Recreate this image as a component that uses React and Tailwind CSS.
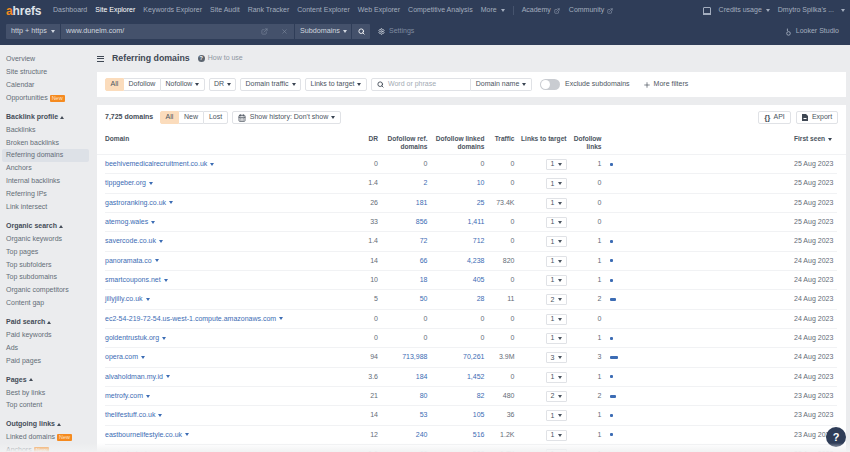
import { Search, Settings, X, ExternalLink, Plus, CalendarDays } from 'lucide-react';

const font = { fontFamily: '"Liberation Sans", Arial, sans-serif' };

const navLinks = ['Dashboard', 'Site Explorer', 'Keywords Explorer', 'Site Audit', 'Rank Tracker', 'Content Explorer', 'Web Explorer', 'Competitive Analysis'];

const sideGroups = [
  { items: [['Overview'], ['Site structure'], ['Calendar'], ['Opportunities', true]] },
  { title: 'Backlink profile', items: [['Backlinks'], ['Broken backlinks'], ['Referring domains', false, true], ['Anchors'], ['Internal backlinks'], ['Referring IPs'], ['Link intersect']] },
  { title: 'Organic search', items: [['Organic keywords'], ['Top pages'], ['Top subfolders'], ['Top subdomains'], ['Organic competitors'], ['Content gap']] },
  { title: 'Paid search', items: [['Paid keywords'], ['Ads'], ['Paid pages']] },
  { title: 'Pages', items: [['Best by links'], ['Top content']] },
  { title: 'Outgoing links', items: [['Linked domains', true], ['Anchors', true]] },
];

const rows = [
  ['beehivemedicalrecruitment.co.uk', '0', '0', '0', '0', 1, '1', '25 Aug 2023'],
  ['tippgeber.org', '1.4', '2', '10', '0', 1, '0', '25 Aug 2023'],
  ['gastroranking.co.uk', '26', '181', '25', '73.4K', 1, '0', '25 Aug 2023'],
  ['atemog.wales', '33', '856', '1,411', '0', 1, '0', '25 Aug 2023'],
  ['savercode.co.uk', '1.4', '72', '712', '0', 1, '1', '25 Aug 2023'],
  ['panoramata.co', '14', '66', '4,238', '820', 1, '1', '24 Aug 2023'],
  ['smartcoupons.net', '10', '18', '405', '0', 1, '1', '24 Aug 2023'],
  ['jillyjilly.co.uk', '5', '50', '28', '11', 2, '2', '24 Aug 2023'],
  ['ec2-54-219-72-54.us-west-1.compute.amazonaws.com', '0', '0', '0', '0', 1, '0', '24 Aug 2023'],
  ['goldentrustuk.org', '0', '0', '0', '0', 1, '1', '24 Aug 2023'],
  ['opera.com', '94', '713,988', '70,261', '3.9M', 3, '3', '24 Aug 2023'],
  ['alvaholdman.my.id', '3.6', '184', '1,452', '0', 1, '1', '24 Aug 2023'],
  ['metrofy.com', '21', '80', '82', '480', 2, '2', '23 Aug 2023'],
  ['thelifestuff.co.uk', '14', '53', '105', '36', 1, '1', '23 Aug 2023'],
  ['eastbournelifestyle.co.uk', '12', '240', '516', '1.2K', 1, '1', '23 Aug 2023'],
  ['lovejoyjack.uk', '1.6', '66', '506', '1.7K', 1, '1', '23 Aug 2023'],
];

function Caret({ className = 'border-t-[#3a4452]' }) {
  return <span className={`inline-block ml-[3px] align-middle w-0 h-0 border-x-[2px] border-x-transparent border-t-[3px] ${className}`} />;
}

function NewBadge() {
  return <span className="ml-[2px] w-[15px] h-[7px] flex items-center justify-center rounded-[1px] bg-[#f58a1f] text-[#fde3c8] text-[5.5px]">New</span>;
}

function FilterButton({ children, className = '' }) {
  return (
    <div className={`h-[13px] flex items-center justify-center bg-white border border-[#e0e2e6] rounded-[2px] text-[7px] text-[#4a535e] whitespace-nowrap ${className}`}>
      {children}
    </div>
  );
}

function Sidebar() {
  return (
    <div className="w-[97px] shrink-0 pt-[8px] flex flex-col gap-[6px] text-[7px] text-[#646c77]">
      {sideGroups.map((group, i) => (
        <div key={i} className="flex flex-col">
          {group.title && (
            <div className="h-[12.9px] pl-[6px] flex items-center font-bold text-[#454d58]">
              {group.title}
              <span className="ml-[2px] w-0 h-0 border-x-[2px] border-x-transparent border-b-[3px] border-b-[#454d58]" />
            </div>
          )}
          {group.items.map(([label, isNew, active]) => (
            <div key={label} className={`h-[12.9px] flex items-center whitespace-nowrap pl-[4px] ml-[2px] mr-[8px] rounded-[2px] ${active ? 'bg-[#dde1e7]' : ''}`}>
              {label}
              {isNew && <NewBadge />}
            </div>
          ))}
        </div>
      ))}
    </div>
  );
}

export default function App() {
  return (
    <div style={font} className="relative w-[850px] h-[452px] overflow-hidden bg-[#ebecee] flex flex-col">
      {/* NAV */}
      <div className="h-[45px] shrink-0 bg-[#2f3d58] text-[7px] text-[#a3adbe]">
        <div className="h-[21px] flex items-center pl-[6px] pr-[5px] whitespace-nowrap">
          <div className="w-[47px] text-[12px] font-bold tracking-[-0.1px] text-[#dfe3ea]">
            <span className="text-[#f58a1f]">a</span>hrefs
          </div>
          <div className="flex gap-[8px] items-center">
            {navLinks.map((l) => (
              <span key={l} className={l === 'Site Explorer' ? 'text-white' : ''}>{l}</span>
            ))}
            <span>More<Caret className="ml-[4px] border-t-[#a3adbe]" /></span>
          </div>
          <div className="w-px h-[9px] bg-[#46546e] mx-[8px]" />
          <span className="flex items-center">Academy<ExternalLink size={6} className="ml-[3px]" /></span>
          <span className="flex items-center ml-[9px]">Community<ExternalLink size={6} className="ml-[3px]" /></span>
          <div className="ml-auto flex items-center">
            <svg width="8" height="8" viewBox="0 0 8 8" className="mr-[8px]">
              <rect x="0.5" y="0.5" width="7" height="7" rx="0.5" fill="none" stroke="#a3adbe" />
              <rect x="0" y="6" width="8" height="2" fill="#a3adbe" />
            </svg>
            <span>Credits usage<Caret className="ml-[4px] border-t-[#a3adbe]" /></span>
            <span className="ml-[8px]">Dmytro Spilka's ...</span>
            <Caret className="ml-[7px] border-t-[#a3adbe]" />
          </div>
        </div>
        <div className="h-[24px] flex items-start pt-[3px] pl-[6px] pr-[11px] text-[7.2px] text-[#d0d6df]">
          <div className="h-[15px] w-[54px] bg-[#44516b] rounded-l-[1px] flex items-center pl-[5px]">
            http + https<Caret className="ml-[4px] border-t-[#d0d6df]" />
          </div>
          <div className="h-[15px] w-[233px] ml-px bg-[#44516b] flex items-center pl-[5px] pr-[6px]">
            www.dunelm.com/
            <ExternalLink size={7} className="ml-auto text-[#7f8ba0]" />
            <X size={7} className="ml-[13px] text-[#7f8ba0]" />
          </div>
          <div className="h-[15px] w-[56px] ml-px bg-[#44516b] flex items-center pl-[5px]">
            Subdomains<Caret className="ml-[3px] border-t-[#d0d6df]" />
          </div>
          <div className="h-[15px] w-[18px] ml-px bg-[#44516b] rounded-r-[1px] flex items-center justify-center">
            <Search size={7} strokeWidth={3} className="text-white" />
          </div>
          <div className="h-[15px] flex items-center">
            <Settings size={7} strokeWidth={3} className="ml-[8px] text-[#c3cad5]" />
            <span className="ml-[4px] text-[7px] text-[#7f8ba0]">Settings</span>
          </div>
          <div className="ml-auto h-[15px] flex items-center text-[7px] text-[#a3adbe]">
            <svg width="5" height="8" viewBox="0 0 5 8" className="mr-[5px]">
              <circle cx="2.5" cy="5.4" r="1.8" fill="none" stroke="#a3adbe" strokeWidth="0.9" />
              <path d="M1.4 0.6 L1.4 3" stroke="#a3adbe" strokeWidth="0.9" />
            </svg>
            Looker Studio
          </div>
        </div>
      </div>

      <div className="flex flex-1 min-h-0">
        <Sidebar />

        <div className="flex-1 min-w-0 pr-[4px]">
          {/* TITLE */}
          <div className="h-[27px] flex items-center text-[#3f4854]">
            <div className="w-[7px] flex flex-col gap-[1.5px]">
              <div className="h-px bg-[#3f4854]" />
              <div className="h-px bg-[#3f4854]" />
              <div className="h-px bg-[#3f4854]" />
            </div>
            <span className="ml-[8px] text-[8.8px] font-bold">Referring domains</span>
            <div className="ml-[8px] w-[7px] h-[7px] rounded-full bg-[#5c6570] text-white text-[5.5px] font-bold flex items-center justify-center">?</div>
            <span className="ml-[3px] text-[7px] text-[#8d95a0]">How to use</span>
          </div>

          {/* FILTERS */}
          <div className="h-[25px] bg-white flex items-center pl-[8px] text-[7px]">
            <FilterButton className="w-[19px] !bg-[#fbdcbc] rounded-r-none !border-[#fbdcbc]">All</FilterButton>
            <FilterButton className="w-[36px] rounded-none border-l-0 border-r-0">Dofollow</FilterButton>
            <FilterButton className="w-[45px] rounded-l-none">Nofollow<Caret /></FilterButton>
            <FilterButton className="w-[27px] ml-[4px]">DR<Caret /></FilterButton>
            <FilterButton className="w-[61px] ml-[4px]">Domain traffic<Caret /></FilterButton>
            <FilterButton className="w-[62px] ml-[4px]">Links to target<Caret /></FilterButton>
            <FilterButton className="ml-[4px] w-[100px] !justify-start pl-[5px] rounded-r-none !text-[#a3aab3]">
              <Search size={7} strokeWidth={3} className="mr-[4px] text-[#3f4854]" />Word or phrase
            </FilterButton>
            <FilterButton className="w-[61px] rounded-l-none border-l-0">Domain name<Caret /></FilterButton>
            <div className="ml-[8px] w-[20px] h-[11px] rounded-full bg-[#c9ccd1] p-[1px]">
              <div className="w-[9px] h-[9px] rounded-full bg-white" />
            </div>
            <span className="ml-[5px] text-[#4d5661] whitespace-nowrap">Exclude subdomains</span>
            <Plus size={8} className="ml-[13px] text-[#3f4854]" />
            <span className="ml-[3px] text-[#4d5661] whitespace-nowrap">More filters</span>
          </div>

          {/* TABLE CARD */}
          <div className="mt-[8px] bg-white text-[7px] text-[#646c77]">
            <div className="h-[25px] flex items-center pl-[8px] pr-[8px]">
              <span className="font-bold text-[#454d58] w-[55px] whitespace-nowrap">7,725 domains</span>
              <FilterButton className="w-[19px] !bg-[#fbdcbc] !border-[#fbdcbc] rounded-r-none">All</FilterButton>
              <FilterButton className="w-[24px] rounded-none border-l-0 border-r-0">New</FilterButton>
              <FilterButton className="w-[25px] rounded-l-none">Lost</FilterButton>
              <FilterButton className="w-[109px] ml-[4px]">
                <CalendarDays size={8} strokeWidth={2.5} className="mr-[4px]" />Show history: Don't show<Caret />
              </FilterButton>
              <FilterButton className="w-[33px] ml-auto"><b className="mr-[3px] text-[8px] leading-none">{'{}'}</b>API</FilterButton>
              <FilterButton className="w-[42px] ml-[5px]">
                <svg width="6" height="7" viewBox="0 0 6 7" className="mr-[4px]">
                  <path d="M0 0 H4 L6 2 V7 H0 Z" fill="#3f4854" />
                  <rect x="1.5" y="4" width="3" height="1" fill="#fff" />
                </svg>
                Export
              </FilterButton>
            </div>

            <div className="h-[25px] border-b border-[#f1f2f4]">
              <div className="flex pt-[5px] pl-[8px] pr-[9px] leading-[8px] font-bold text-[#4b5460] text-[6.6px] whitespace-nowrap">
                <div className="w-[273px] flex justify-between">
                  <span>Domain</span><span>DR</span>
                </div>
                <div className="w-[49.5px] text-right">Dofollow ref.<br />domains</div>
                <div className="w-[57px] text-right">Dofollow linked<br />domains</div>
                <div className="w-[30px] text-right">Traffic</div>
                <div className="w-[52px] text-right">Links to target</div>
                <div className="w-[35px] text-right">Dofollow<br />links</div>
                <div className="flex-1" />
                <div className="w-[43px]">First seen<Caret /></div>
              </div>
            </div>

            {rows.map((r) => (
              <div key={r[0]} className="h-[19.33px] flex items-center ml-[8px] mr-[9px] border-b border-[#f1f2f4] whitespace-nowrap">
                <div className="w-[273px] flex justify-between">
                  <span className="text-[#3c6cb4]">{r[0]}<Caret className="border-t-[#3c6cb4]" /></span>
                  <span>{r[1]}</span>
                </div>
                <div className={`w-[49.5px] text-right ${r[2] !== '0' ? 'text-[#3c6cb4]' : ''}`}>{r[2]}</div>
                <div className={`w-[57px] text-right ${r[3] !== '0' ? 'text-[#3c6cb4]' : ''}`}>{r[3]}</div>
                <div className="w-[30px] text-right">{r[4]}</div>
                <div className="w-[52px] flex justify-end">
                  <div className="w-[21px] h-[11px] mt-px border border-[#e0e2e6] rounded-[1px] flex items-center pl-[4px] text-[#4a535e]">
                    {r[5]}<Caret className="ml-[4px]" />
                  </div>
                </div>
                <div className="w-[35px] text-right">{r[6]}</div>
                <div className="flex-1 pl-[8px]">
                  {r[6] !== '0' && <div className="h-[3px] rounded-[1px] bg-[#3c6cb4]" style={{ width: [0, 3, 6, 8][+r[6]] }} />}
                </div>
                <div className="w-[43px] pr-[4px] text-right">{r[7]}</div>
              </div>
            ))}
          </div>
        </div>
      </div>

      {/* HELP */}
      <div className="absolute left-[826px] top-[427px] w-[20px] h-[20px] rounded-full bg-[#2f3d58] text-white text-[11px] font-bold flex items-center justify-center">?</div>
      <div className="absolute left-0 right-0 bottom-0 h-[9px] bg-gradient-to-b from-transparent to-[#f1f2f3]" />
    </div>
  );
}
